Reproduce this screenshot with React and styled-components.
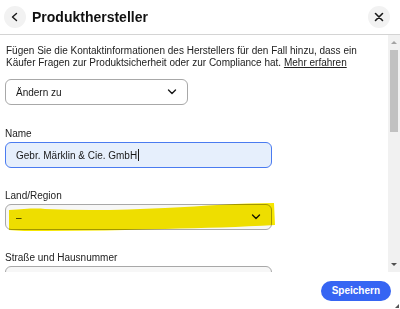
import React from "react";
import styled, { createGlobalStyle } from "styled-components";

const GlobalStyle = createGlobalStyle`
  html, body {
    margin: 0;
    padding: 0;
    background: #fff;
  }
  body {
    font-family: "Liberation Sans", Arial, sans-serif;
    color: #191919;
  }
`;

function Chevron({ dir = "down", size = 10 }) {
  const d = dir === "left" ? "M6.5 1.5 L2.5 5 L6.5 8.5" : "M1.5 3 L5 6.5 L8.5 3";
  return (
    <svg width={size} height={size} viewBox="0 0 10 10">
      <path d={d} fill="none" stroke="#191919" strokeWidth="1.4" strokeLinecap="round" strokeLinejoin="round" />
    </svg>
  );
}

function Field({ label, children }) {
  return (
    <FieldGroup>
      <Label>{label}</Label>
      {children}
    </FieldGroup>
  );
}

export default function App() {
  return (
    <>
      <GlobalStyle />
      <Dialog>
        <Header>
          <IconButton aria-label="Zurück">
            <Chevron dir="left" size={10} />
          </IconButton>
          <Title>Produkthersteller</Title>
          <IconButton aria-label="Schließen">
            <svg width="10" height="10" viewBox="0 0 10 10">
              <path d="M1.5 1.5 L8.5 8.5 M8.5 1.5 L1.5 8.5" stroke="#191919" strokeWidth="1.6" strokeLinecap="round" />
            </svg>
          </IconButton>
        </Header>
        <Body>
          <Content>
            <Intro>
              Fügen Sie die Kontaktinformationen des Herstellers für den Fall hinzu, dass ein
              <br />
              Käufer Fragen zur Produktsicherheit oder zur Compliance hat. <Link>Mehr erfahren</Link>
            </Intro>
            <Select $width={183}>
              <span>Ändern zu</span>
              <Chevron />
            </Select>
            <Field label="Name">
              <Input $focused>
                Gebr. Märklin &amp; Cie. GmbH<Caret />
              </Input>
            </Field>
            <Field label="Land/Region">
              <Highlighted>
                <Select $width={267} $grey>
                  <span>–</span>
                  <Chevron />
                </Select>
                {/* highlighter stroke drawn over the field */}
                <Marker viewBox="0 0 270 32">
                  <path
                    d="M4 10 C20 9 30 8 40 9 C80 11 120 10 160 8 C200 6 235 3 269 3 L270 25 C235 27 200 28 160 29 C120 30 80 31 40 31 C25 31 12 31 4 30 Z"
                    fill="#f6e600"
                  />
                </Marker>
              </Highlighted>
            </Field>
            <Field label="Straße und Hausnummer">
              <Input />
            </Field>
          </Content>
          <Scrollbar>
            <Arrow $up />
            <Thumb />
            <Spacer />
            <Arrow />
          </Scrollbar>
        </Body>
        <Footer>
          <PrimaryButton>Speichern</PrimaryButton>
          <Grip />
        </Footer>
      </Dialog>
    </>
  );
}

const Dialog = styled.div`
  width: 400px;
  height: 309px;
  display: flex;
  flex-direction: column;
  overflow: hidden;
  position: relative;
`;

const Header = styled.header`
  height: 35px;
  box-sizing: border-box;
  border-bottom: 1px solid #d4d4d4;
  display: flex;
  align-items: center;
  padding: 0 10px 1px 4px;
  gap: 6px;
`;

const IconButton = styled.button`
  width: 22px;
  height: 22px;
  border-radius: 50%;
  border: none;
  background: #f2f2f2;
  display: flex;
  align-items: center;
  justify-content: center;
  padding: 0;
`;

const Title = styled.h1`
  flex: 1;
  margin: 0;
  font-size: 14px;
  font-weight: bold;
  color: #111;
`;

const Body = styled.div`
  flex: 1;
  display: flex;
  min-height: 0;
`;

const Content = styled.div`
  flex: 1;
  overflow: hidden;
  padding: 10px 0 0 5px;
`;

const Intro = styled.p`
  margin: 0 0 10px 1px;
  font-size: 10px;
  line-height: 12px;
  color: #222;
  white-space: nowrap;
`;

const Link = styled.a`
  text-decoration: underline;
  color: inherit;
`;

const Select = styled.div`
  width: ${(p) => p.$width}px;
  height: 26px;
  box-sizing: border-box;
  border: 1px solid #a8a8a8;
  border-radius: 6px;
  background: ${(p) => (p.$grey ? "#f7f7f7" : "#fff")};
  display: flex;
  align-items: center;
  justify-content: space-between;
  padding: 0 10px 0 10px;
  font-size: 10px;
`;

const FieldGroup = styled.div`
  margin-top: 22px;
  &:nth-of-type(2) {
    margin-top: 23px;
  }
`;

const Label = styled.div`
  font-size: 10px;
  line-height: 12px;
  margin-bottom: 2px;
  color: #222;
`;

const Input = styled.div`
  width: 267px;
  height: 26px;
  box-sizing: border-box;
  border: ${(p) => (p.$focused ? "1.5px solid #4a7bf0" : "1px solid #a8a8a8")};
  border-radius: 6px;
  background: ${(p) => (p.$focused ? "#e6effc" : "#f7f7f7")};
  display: flex;
  align-items: center;
  padding-left: 10px;
  font-size: 10px;
  color: #191919;
`;

const Caret = styled.span`
  display: inline-block;
  width: 1px;
  height: 12px;
  background: #191919;
  margin-left: 1px;
`;

const Highlighted = styled.div`
  position: relative;
  width: 270px;
`;

const Marker = styled.svg`
  position: absolute;
  left: 0;
  top: -4px;
  width: 270px;
  height: 32px;
  mix-blend-mode: multiply;
  pointer-events: none;
`;

const Scrollbar = styled.div`
  width: 12px;
  background: #f1f1f1;
  display: flex;
  flex-direction: column;
  align-items: center;
  padding: 4px 0 4px;
  box-sizing: border-box;
`;

const Arrow = styled.div`
  width: 0;
  height: 0;
  border-left: 3px solid transparent;
  border-right: 3px solid transparent;
  ${(p) => (p.$up ? "border-bottom: 3px solid #a3a3a3;" : "border-top: 3px solid #505050;")}
  margin: 2px 0;
`;

const Thumb = styled.div`
  width: 8px;
  height: 82px;
  background: #c1c1c1;
  margin-top: 4px;
`;

const Spacer = styled.div`
  flex: 1;
`;

const Footer = styled.footer`
  height: 37px;
  display: flex;
  align-items: center;
  justify-content: flex-end;
  padding-right: 9px;
  position: relative;
`;

const PrimaryButton = styled.button`
  height: 20px;
  padding: 0 11px;
  border: none;
  border-radius: 10px;
  background: #3665f3;
  color: #fff;
  font-family: "Liberation Sans", Arial, sans-serif;
  font-size: 10px;
  font-weight: bold;
`;

const Grip = styled.div`
  position: absolute;
  right: 1px;
  bottom: 1px;
  width: 0;
  height: 0;
  border-left: 4px solid transparent;
  border-bottom: 4px solid #555;
`;
